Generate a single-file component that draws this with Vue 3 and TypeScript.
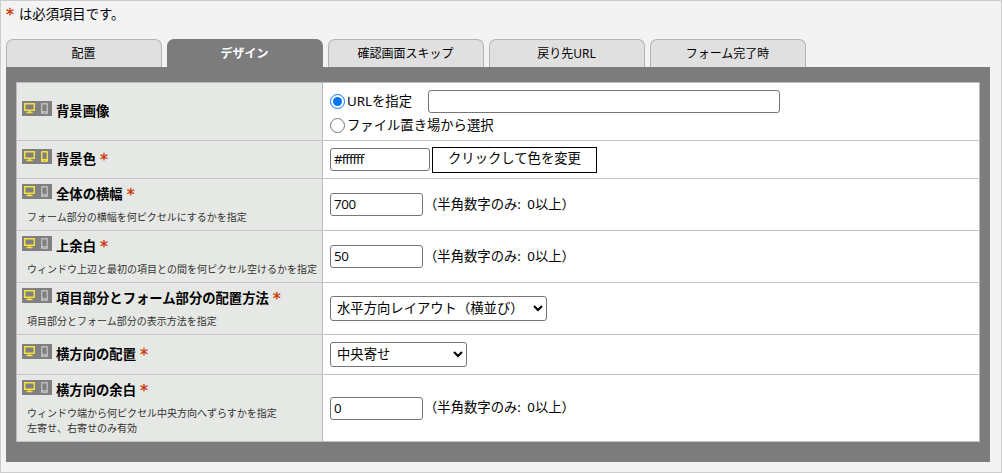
<script setup lang="ts">
import { ref } from 'vue'

interface Field {
  id: string
  label: string
  required: boolean
  mobile: boolean
  hints: string[]
  height: number
}

const tabs = ['配置', 'デザイン', '確認画面スキップ', '戻り先URL', 'フォーム完了時']
const active = ref(1)

const source = ref('url')
const imageUrl = ref('')
const color = ref('#ffffff')
const numbers = ref<Record<string, string>>({ width: '700', top: '50', side: '0' })
const layout = ref('水平方向レイアウト（横並び）')
const align = ref('中央寄せ')

const fields: Field[] = [
  { id: 'image', label: '背景画像', required: false, mobile: false, hints: [], height: 58 },
  { id: 'color', label: '背景色', required: true, mobile: true, hints: [], height: 38 },
  { id: 'width', label: '全体の横幅', required: true, mobile: false, hints: ['フォーム部分の横幅を何ピクセルにするかを指定'], height: 52 },
  { id: 'top', label: '上余白', required: true, mobile: false, hints: ['ウィンドウ上辺と最初の項目との間を何ピクセル空けるかを指定'], height: 52 },
  { id: 'layout', label: '項目部分とフォーム部分の配置方法', required: true, mobile: false, hints: ['項目部分とフォーム部分の表示方法を指定'], height: 52 },
  { id: 'align', label: '横方向の配置', required: true, mobile: false, hints: [], height: 40 },
  { id: 'side', label: '横方向の余白', required: true, mobile: false, hints: ['ウィンドウ端から何ピクセル中央方向へずらすかを指定', '左寄せ、右寄せのみ有効'], height: 67 },
]
</script>

<template>
  <div class="page">
    <p class="note"><span class="star">*</span><span>は必須項目です。</span></p>
    <nav class="tabs">
      <button v-for="(tab, i) in tabs" :key="tab" class="tab" :class="{ on: i === active }" @click="active = i">{{ tab }}</button>
    </nav>
    <section class="panel">
      <div class="table">
        <div v-for="f in fields" :key="f.id" class="row" :style="{ height: f.height + 'px' }">
          <div class="head" :class="{ hinted: f.hints.length }">
            <div class="title">
              <svg class="devices" width="30" height="15" viewBox="0 0 30 15">
                <rect width="30" height="15" fill="#808080" />
                <g fill="none" stroke="#f3df43">
                  <rect x="2.75" y="2.75" width="9.5" height="6.5" stroke-width="1.5" />
                  <path d="M7.5 9.5v2M4.5 11.6h6" stroke-width="1.5" />
                </g>
                <g :class="f.mobile ? 'lit' : 'dim'">
                  <path fill-rule="evenodd" d="M20 2h5q1 0 1 1v9q0 1-1 1h-5q-1 0-1-1V3q0-1 1-1zM20.4 3.5v6.5h4.2V3.5zM22 11v1h1v-1z" />
                </g>
              </svg>
              <b class="label">{{ f.label }}</b>
              <span v-if="f.required" class="star">*</span>
            </div>
            <div v-if="f.hints.length" class="hints">
              <div v-for="h in f.hints" :key="h">{{ h }}</div>
            </div>
          </div>

          <div v-if="f.id === 'image'" class="cell stack">
            <div class="choice">
              <label><input v-model="source" type="radio" value="url"><span>URLを指定</span></label>
              <input v-model="imageUrl" class="box url" type="text">
            </div>
            <div class="choice">
              <label><input v-model="source" type="radio" value="file"><span>ファイル置き場から選択</span></label>
            </div>
          </div>
          <div v-else-if="f.id === 'color'" class="cell">
            <input v-model="color" class="box hex" type="text">
            <button class="pick">クリックして色を変更</button>
          </div>
          <div v-else-if="f.id === 'layout'" class="cell">
            <select v-model="layout" class="select wide">
              <option>水平方向レイアウト（横並び）</option>
              <option>垂直方向レイアウト（縦並び）</option>
            </select>
          </div>
          <div v-else-if="f.id === 'align'" class="cell">
            <select v-model="align" class="select">
              <option>左寄せ</option>
              <option>中央寄せ</option>
              <option>右寄せ</option>
            </select>
          </div>
          <div v-else class="cell">
            <input v-model="numbers[f.id]" class="box num" type="text">
            <span class="range">（半角数字のみ: 0以上）</span>
          </div>
        </div>
      </div>
    </section>
  </div>
</template>

<style>
body {
  margin: 0;
}
</style>

<style scoped>
.page,
.page * {
  box-sizing: border-box;
}
.page {
  width: 1002px;
  height: 473px;
  border: 1px solid #ccc;
  background: #f3f3f3;
  padding: 3px 11px 0 5px;
  font-family: "Noto Sans", "Noto Sans CJK JP", sans-serif;
  font-size: 13.33px;
  color: #000;
  overflow: hidden;
  white-space: nowrap;
}
input,
select,
button {
  font: inherit;
  color: inherit;
  margin: 0;
}
.note {
  display: flex;
  gap: 5px;
  height: 20px;
  margin: 0 0 15px;
  line-height: 20px;
}
.star {
  color: #c30;
  font: 16px/22px "DejaVu Sans", sans-serif;
  -webkit-text-stroke: 0.3px #c30;
  width: 8px;
}
.tabs {
  display: flex;
  gap: 5px;
  height: 28px;
}
.tab {
  width: 156px;
  border: 1px solid #b3b3b3;
  border-bottom: 0;
  border-radius: 7px 7px 0 0;
  background: #e0e0e0;
  padding: 0 1px 0 0;
  font-size: 12px;
  line-height: 27px;
}
.tab.on {
  background: #7c7c7c;
  border-color: #7c7c7c;
  color: #fff;
  font-weight: bold;
}
.panel {
  height: 395px;
  background: #7c7c7c;
  padding: 15px 10px 20px;
}
.table {
  border: 1px solid #bbb;
  border-bottom: 0;
  background: #fff;
}
.row {
  display: flex;
  border-bottom: 1px solid #c4c4c4;
}
.head {
  width: 306px;
  border-right: 1px solid #b8b8b8;
  background: #e6e8e5;
  padding-left: 5px;
  display: flex;
  flex-direction: column;
  justify-content: center;
}
.head.hinted {
  justify-content: flex-start;
  padding-top: 5px;
}
.title {
  display: flex;
  height: 21px;
  line-height: 20px;
}
.devices {
  flex: none;
  margin-right: 4px;
}
.lit {
  fill: #f3df43;
}
.dim {
  fill: #bdbdbd;
}
.label {
  margin-right: 4px;
}
.hints {
  padding: 5px 0 0 5px;
  font-size: 10px;
  line-height: 15px;
  color: #333;
}
.cell {
  flex: 1;
  display: flex;
  align-items: center;
  padding-left: 7px;
}
.stack {
  flex-direction: column;
  align-items: flex-start;
  justify-content: center;
  padding-top: 3px;
}
.choice {
  display: flex;
  align-items: center;
  height: 24px;
}
.choice label {
  display: flex;
  align-items: center;
  gap: 2px;
}
.choice label span {
  padding: 0 0 2px;
}
.choice input[type='radio'] {
  width: 15px;
  height: 15px;
}
.box {
  height: 23px;
  border: 1px solid #767676;
  border-radius: 3px;
  background: #fff;
  padding: 0 3px 1px;
  font-family: "Open Sans", "Noto Sans CJK JP", sans-serif;
  letter-spacing: -0.4px;
}
.url {
  width: 352px;
  margin-left: 16px;
}
.hex {
  width: 100px;
  letter-spacing: -0.9px;
}
.num {
  width: 93px;
}
.pick {
  width: 165px;
  height: 26px;
  margin-left: 2px;
  border: 1px solid #000;
  background: #fff;
  padding: 0 0 3px;
  line-height: 21px;
}
.select {
  width: 137px;
  height: 25px;
  border: 1px solid #767676;
  border-radius: 3px;
  background-color: #fff;
  padding: 0 2px 1px;
}
.select.wide {
  width: 217px;
}
.range {
  margin-left: 1px;
  padding-bottom: 3px;
  word-spacing: 3px;
}
</style>
